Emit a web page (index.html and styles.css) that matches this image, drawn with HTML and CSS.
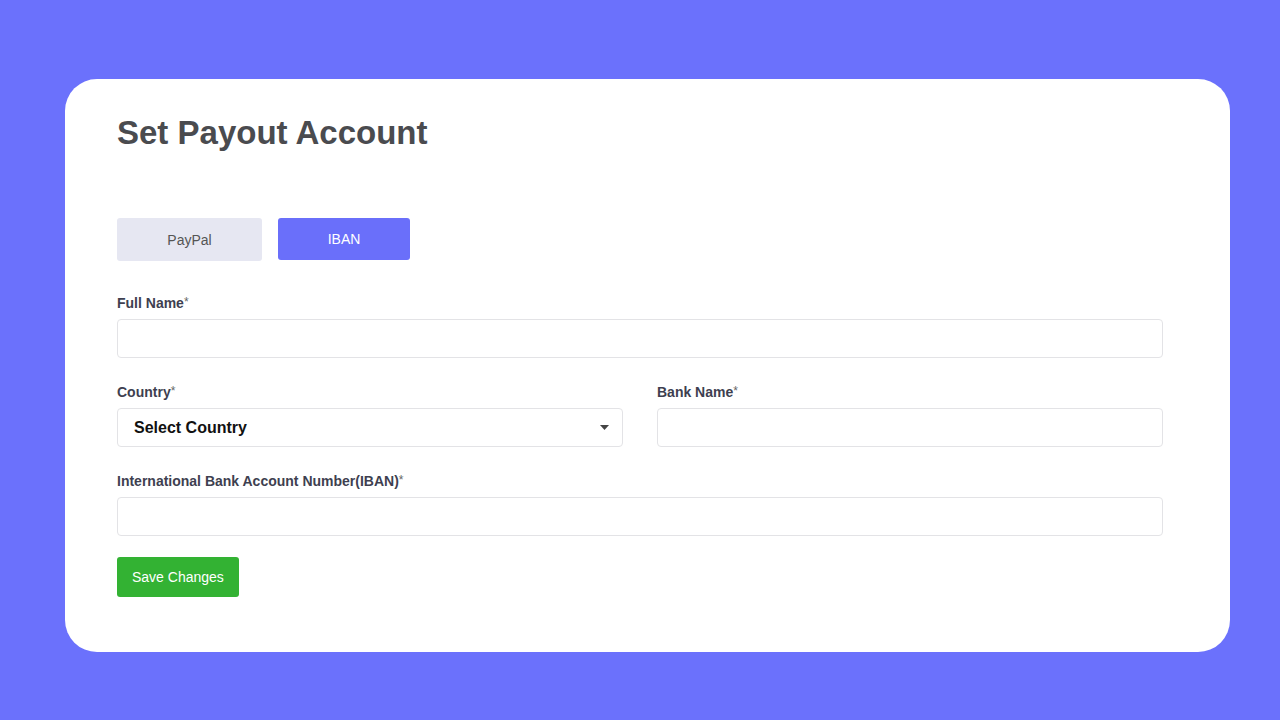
FILE: index.html
```html
<!DOCTYPE html>
<html lang="en">
<head>
    <meta charset="UTF-8">
    <meta name="viewport" content="width=device-width, initial-scale=1.0">
    <title>Set Payout Account</title>
    <link rel="stylesheet" href="styles.css">
</head>
<body>
    <div class="card">
        <h1 class="title">Set Payout Account</h1>

        <div class="tabs">
            <button class="tab">PayPal</button>
            <button class="tab active">IBAN</button>
        </div>

        <form class="form">
            <div class="field">
                <label>Full Name<span class="req">*</span></label>
                <input type="text" class="input">
            </div>

            <div class="row">
                <div class="field">
                    <label>Country<span class="req">*</span></label>
                    <div class="select">
                        <span>Select Country</span>
                        <svg width="9" height="5" viewBox="0 0 9 5"><path d="M0 0h9L4.5 5z" fill="#444"/></svg>
                    </div>
                </div>
                <div class="field">
                    <label>Bank Name<span class="req">*</span></label>
                    <input type="text" class="input">
                </div>
            </div>

            <div class="field">
                <label>International Bank Account Number(IBAN)<span class="req">*</span></label>
                <input type="text" class="input">
            </div>

            <div class="actions">
                <button type="button" class="save">Save Changes</button>
            </div>
        </form>
    </div>
</body>
</html>
```

FILE: styles.css
```css
body {
    margin: 0;
    background-color: #6b71fc;
    font-family: "Liberation Sans", Arial, sans-serif;
    height: 720px;
    padding-top: 79px;
    box-sizing: border-box;
}
.card {
    margin-left: 65px;
    width: 1165px;
    height: 573px;
    background: white;
    border-radius: 32px;
    box-sizing: border-box;
    padding: 32px 67px 0 52px;
}
.title {
    margin: 0;
    font-size: 33px;
    font-weight: bold;
    color: #4a4b4f;
    line-height: 44px;
}
.tabs {
    display: flex;
    gap: 16px;
    margin-top: 63px;
}
.tab {
    border: none;
    border-radius: 3px;
    height: 43px;
    width: 145px;
    font-family: inherit;
    font-size: 14px;
    color: #555;
    background: #e6e7f2;
}
.tab.active {
    width: 132px;
    height: 42px;
    background: #6a6ffa;
    color: white;
}
.form {
    margin-top: 33px;
    display: flex;
    flex-direction: column;
    gap: 25px;
}
.field {
    display: flex;
    flex-direction: column;
    gap: 8px;
    flex: 1;
}
.field label {
    font-size: 14px;
    font-weight: bold;
    color: #3e3f50;
    line-height: 16px;
}
.req {
    font-weight: normal;
    color: #666;
    font-size: 12px;
    vertical-align: 2px;
}
.input, .select {
    height: 39px;
    box-sizing: border-box;
    border: 1px solid #e3e3e6;
    border-radius: 4px;
    margin: 0;
}
.row {
    display: flex;
    gap: 34px;
}
.select {
    display: flex;
    align-items: center;
    justify-content: space-between;
    padding: 0 13px 0 16px;
    font-size: 16px;
    font-weight: bold;
    color: #111;
}
.actions {
    margin-top: -4px;
}
.save {
    border: none;
    border-radius: 3px;
    background: #33b233;
    color: white;
    font-family: inherit;
    font-size: 14px;
    height: 40px;
    padding: 0 15px;
}
```
